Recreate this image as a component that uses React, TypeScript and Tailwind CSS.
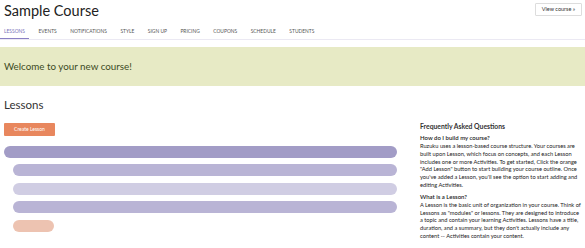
const tabs = ['Lessons', 'Events', 'Notifications', 'Style', 'Sign up', 'Pricing', 'Coupons', 'Schedule', 'Students'];

const bars = [
  { indent: false, color: 'bg-[#a29cc6]' },
  { indent: true, color: 'bg-[#b9b4d5]' },
  { indent: true, color: 'bg-[#d0cde3]' },
  { indent: true, color: 'bg-[#b9b4d5]' },
];

export default function App() {
  return (
    <div className="w-[585px] h-[248px] overflow-hidden bg-white text-[#333] font-['Lato','Open_Sans',sans-serif]">
      {/* Header */}
      <div className="flex items-start justify-between pl-1 pr-[3px]">
        <h1 className="pt-[1.5px] text-[14.5px] leading-[1.2] text-[#222]">Sample Course</h1>
        <button className="mt-[3px] h-[13px] w-[47px] border border-[#ddd] rounded-[1px] bg-white text-[5.5px] text-[#333] leading-none">
          View course »
        </button>
      </div>

      {/* Tabs */}
      <div className="mt-[9px] flex border-b border-[#ebe9f3]">
        {tabs.map((tab, i) => (
          <div
            key={tab}
            className={`px-1 pb-[3px] text-[4.9px] uppercase leading-[7px] ${
              i === 0 ? 'border-b border-[#8a80c4] text-[#7a70b8]' : 'text-[#555] ml-[5.5px]'
            }`}
          >
            {tab}
          </div>
        ))}
      </div>

      {/* Welcome banner */}
      <div className="mt-[7px] h-[39px] bg-[#e7eac5] flex items-center px-1">
        <p className="text-[9.8px] text-[#3c4a1f]">Welcome to your new course!</p>
      </div>

      <div className="flex pl-1 pr-[3px]">
        {/* Lessons column */}
        <div className="w-[393px]">
          <h2 className="mt-[12px] text-[11.5px] leading-[14px] text-[#333]">Lessons</h2>
          <button className="mt-[11px] h-[13px] w-[51px] rounded-[1px] bg-[#e8875e] text-white text-[5px] leading-none">
            Create Lesson
          </button>
          <div className="mt-[9px] flex flex-col gap-[6.5px]">
            {bars.map((bar, i) => (
              <div key={i} className={`h-[12px] rounded-full ${bar.color} ${bar.indent ? 'ml-[9px]' : ''}`} />
            ))}
            <div className="ml-[9px] h-[12px] w-[41px] rounded-full bg-[#edc3b1]" />
          </div>
        </div>

        {/* FAQ column */}
        <div className="ml-[23px] flex-1 pt-[36px] text-[5.7px] leading-[7.75px] text-[#222]">
          <h3 className="text-[6.8px] font-bold leading-[9px] text-[#333]">Frequently Asked Questions</h3>
          <h4 className="mt-[3.5px] text-[6px] font-semibold leading-[7.75px]">How do I build my course?</h4>
          <p>
            Ruzuku uses a lesson-based course structure. Your courses are built upon Lesson, which focus on concepts, and
            each Lesson includes one or more Activities. To get started, Click the orange "Add Lesson" button to start
            building your course outline. Once you've added a Lesson, you'll see the option to start adding and editing
            Activities.
          </p>
          <h4 className="mt-[4.5px] text-[6px] font-semibold leading-[7.75px]">What is a Lesson?</h4>
          <p>
            A Lesson is the basic unit of organization in your course. Think of Lessons as "modules" or lessons. They are
            designed to introduce a topic and contain your learning Activities. Lessons have a title, duration, and a
            summary, but they don't actually include any content -- Activities contain your content.
          </p>
        </div>
      </div>
    </div>
  );
}
